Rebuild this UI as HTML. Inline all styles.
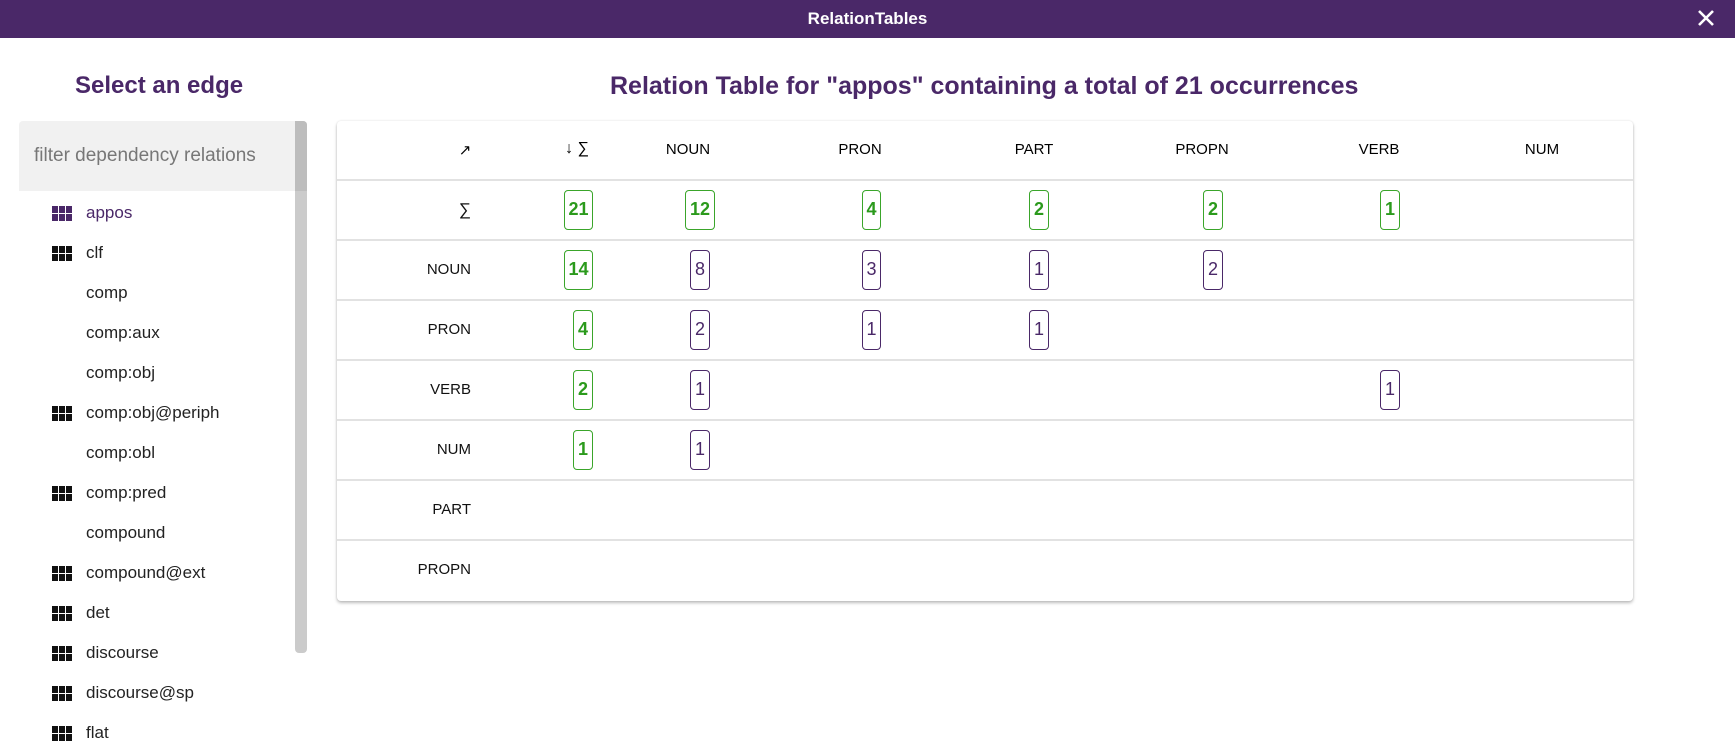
<!DOCTYPE html>
<html><head><meta charset="utf-8"><style>
*{margin:0;padding:0;box-sizing:border-box}
body{width:1735px;height:741px;overflow:hidden;background:#fff;font-family:"Liberation Sans",sans-serif;position:relative}
.hdr{position:absolute;left:0;top:0;width:1735px;height:38px;background:#4a2868;color:#fff;font-weight:bold;font-size:17px;text-align:center;line-height:38px}
.x{position:absolute;left:1696px;top:8px}
.h{position:absolute;color:#4a2868;font-weight:bold;font-size:24px;white-space:nowrap}
.filter{position:absolute;left:19px;top:121px;width:276px;height:70px;background:#f1f1f1;color:#777;font-size:19px;line-height:70px;padding-left:15px;border-radius:4px 0 0 0}
.sb{position:absolute;left:295px;top:121px;width:12px;height:532px;background:#cbcbcb;border-radius:0 4px 4px 4px}
.sbt{position:absolute;left:295px;top:121px;width:12px;height:70px;background:#bdbdbd;border-radius:0 4px 0 0}
.it{position:absolute;left:86px;font-size:17px;color:#222;line-height:20px}
.ic{position:absolute;left:52px}
.card{position:absolute;left:337px;top:121px;width:1296px;height:480px;background:#fff;border-radius:4px;box-shadow:0 2px 3px rgba(0,0,0,.25),0 0 2px rgba(0,0,0,.1)}
.ln{position:absolute;left:337px;width:1296px;height:2px;background:#e2e2e2}
.th{position:absolute;top:141px;font-size:15px;color:#000;transform:translateX(-50%);white-space:nowrap}
.rl{position:absolute;right:1264px;font-size:15px;color:#111;line-height:20px}
.b{position:absolute;height:40px;border:1.5px solid #3aa52a;border-radius:4px;color:#2b9a1c;font-size:18px;font-weight:bold;line-height:37px;text-align:center}
.p{border-color:#4a2868;color:#4a2868;font-weight:normal}
</style></head><body>
<div class="hdr">RelationTables</div>
<svg class="x" width="20" height="20" viewBox="0 0 20 20"><path d="M3 3L17 17M17 3L3 17" stroke="#fff" stroke-width="2.6"/></svg>
<div class="h" style="left:75px;top:72px">Select an edge</div>
<div class="h" style="left:610px;top:72px;font-size:25px">Relation Table for "appos" containing a total of 21 occurrences</div>
<div class="filter">filter dependency relations</div>
<div class="sb"></div><div class="sbt"></div>

<svg width="0" height="0" style="position:absolute"><defs><g id="g"><rect x="0" y="0" width="6" height="7"/><rect x="7" y="0" width="6" height="7"/><rect x="14" y="0" width="6" height="7"/><rect x="0" y="8" width="6" height="7"/><rect x="7" y="8" width="6" height="7"/><rect x="14" y="8" width="6" height="7"/></g></defs></svg>
<svg class="ic" style="top:206px" width="20" height="15"><use href="#g" fill="#4a2868"/></svg>
<div class="it" style="top:203px;color:#4a2868">appos</div>
<div class="it" style="top:243px">clf</div>
<div class="it" style="top:283px">comp</div>
<div class="it" style="top:323px">comp:aux</div>
<div class="it" style="top:363px">comp:obj</div>
<div class="it" style="top:403px">comp:obj@periph</div>
<div class="it" style="top:443px">comp:obl</div>
<div class="it" style="top:483px">comp:pred</div>
<div class="it" style="top:523px">compound</div>
<div class="it" style="top:563px">compound@ext</div>
<div class="it" style="top:603px">det</div>
<div class="it" style="top:643px">discourse</div>
<div class="it" style="top:683px">discourse@sp</div>
<div class="it" style="top:723px">flat</div>
<svg class="ic" style="top:246px" width="20" height="15"><use href="#g" fill="#111"/></svg>
<svg class="ic" style="top:406px" width="20" height="15"><use href="#g" fill="#111"/></svg>
<svg class="ic" style="top:486px" width="20" height="15"><use href="#g" fill="#111"/></svg>
<svg class="ic" style="top:566px" width="20" height="15"><use href="#g" fill="#111"/></svg>
<svg class="ic" style="top:606px" width="20" height="15"><use href="#g" fill="#111"/></svg>
<svg class="ic" style="top:646px" width="20" height="15"><use href="#g" fill="#111"/></svg>
<svg class="ic" style="top:686px" width="20" height="15"><use href="#g" fill="#111"/></svg>
<svg class="ic" style="top:726px" width="20" height="15"><use href="#g" fill="#111"/></svg>

<div class="card"></div>
<div class="ln" style="top:179px"></div>
<div class="ln" style="top:239px"></div>
<div class="ln" style="top:299px"></div>
<div class="ln" style="top:359px"></div>
<div class="ln" style="top:419px"></div>
<div class="ln" style="top:479px"></div>
<div class="ln" style="top:539px"></div>

<div class="th" style="left:465px">↗</div>
<div class="th" style="left:577px;font-size:16px;top:140px">↓ ∑</div>
<div class="th" style="left:688px">NOUN</div>
<div class="th" style="left:860px">PRON</div>
<div class="th" style="left:1034px">PART</div>
<div class="th" style="left:1202px">PROPN</div>
<div class="th" style="left:1379px">VERB</div>
<div class="th" style="left:1542px">NUM</div>

<div class="rl" style="top:200px;font-size:17px">∑</div>
<div class="rl" style="top:260px">NOUN</div>
<div class="rl" style="top:320px">PRON</div>
<div class="rl" style="top:380px">VERB</div>
<div class="rl" style="top:440px">NUM</div>
<div class="rl" style="top:500px">PART</div>
<div class="rl" style="top:560px">PROPN</div>

<div class="b" style="left:564px;top:190px;width:29px">21</div>
<div class="b" style="left:685px;top:190px;width:30px">12</div>
<div class="b" style="left:862px;top:190px;width:19px">4</div>
<div class="b" style="left:1029px;top:190px;width:20px">2</div>
<div class="b" style="left:1203px;top:190px;width:20px">2</div>
<div class="b" style="left:1380px;top:190px;width:20px">1</div>
<div class="b" style="left:564px;top:250px;width:29px">14</div>
<div class="b p" style="left:690px;top:250px;width:20px">8</div>
<div class="b p" style="left:862px;top:250px;width:19px">3</div>
<div class="b p" style="left:1029px;top:250px;width:20px">1</div>
<div class="b p" style="left:1203px;top:250px;width:20px">2</div>
<div class="b" style="left:573px;top:310px;width:20px">4</div>
<div class="b p" style="left:690px;top:310px;width:20px">2</div>
<div class="b p" style="left:862px;top:310px;width:19px">1</div>
<div class="b p" style="left:1029px;top:310px;width:20px">1</div>
<div class="b" style="left:573px;top:370px;width:20px">2</div>
<div class="b p" style="left:690px;top:370px;width:20px">1</div>
<div class="b p" style="left:1380px;top:370px;width:20px">1</div>
<div class="b" style="left:573px;top:430px;width:20px">1</div>
<div class="b p" style="left:690px;top:430px;width:20px">1</div>
</body></html>
